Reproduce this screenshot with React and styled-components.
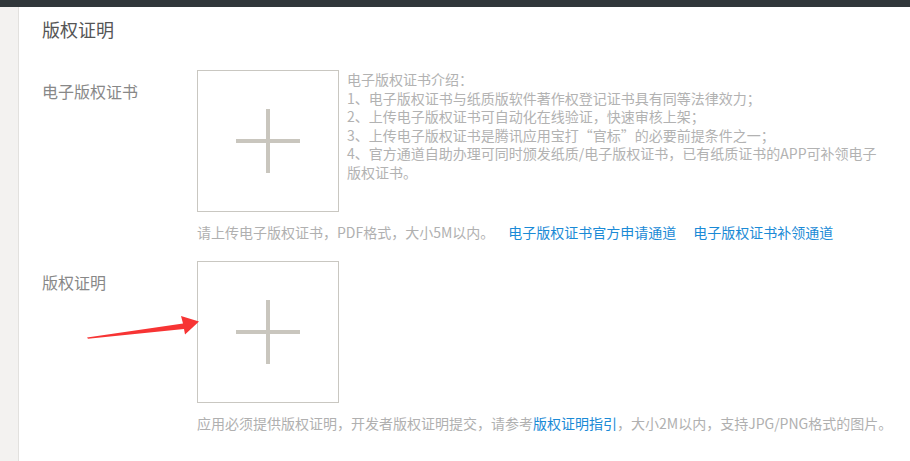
import React from 'react'
import styled, { createGlobalStyle } from 'styled-components'

const GlobalStyle = createGlobalStyle`
  html, body {
    margin: 0;
    padding: 0;
    background: #fff;
    font-family: "Noto Sans CJK SC", "Noto Sans", sans-serif;
  }
`

const Page = styled.div`
  position: relative;
  width: 910px;
  height: 461px;
  overflow: hidden;
  background: #fff;
`

const TopBar = styled.div`
  height: 7px;
  background: #30373a;
`

const Body = styled.div`
  display: flex;
  height: 454px;
`

const Sidebar = styled.aside`
  width: 18px;
  flex-shrink: 0;
  background: #f3f2f0;
  border-right: 1px solid #e2e1de;
`

const Main = styled.main`
  flex: 1;
  padding: 10px 0 0 23px;
`

const Title = styled.h2`
  margin: 0 0 29px;
  font-size: 18px;
  line-height: 24px;
  font-weight: normal;
  color: #555;
`

const Field = styled.section`
  display: grid;
  grid-template-columns: 155px 1fr;
  margin-bottom: ${p => p.$gap || 0}px;
`

const Label = styled.div`
  padding-top: 10px;
  font-size: 16px;
  line-height: 22px;
  color: #888;
`

const Upload = styled.div`
  display: flex;
  align-items: flex-start;
  gap: 8px;
`

const Box = styled.div`
  position: relative;
  width: 142px;
  height: 142px;
  box-sizing: border-box;
  border: 1px solid #c9c7c1;
  flex-shrink: 0;
  cursor: pointer;

  &::before, &::after {
    content: '';
    position: absolute;
    background: #c9c6be;
    left: 50%;
    top: 50%;
    transform: translate(-50%, -50%);
  }
  &::before { width: 64px; height: 4px; }
  &::after { width: 4px; height: 64px; }
`

const Intro = styled.div`
  font-size: 14px;
  line-height: 18.6px;
  color: #b2b2b2;
  white-space: nowrap;
`

const Hint = styled.div`
  grid-column: 2;
  margin-top: 10px;
  font-size: 14px;
  line-height: 20px;
  color: #b0b0b0;
  white-space: nowrap;
`

const Link = styled.a`
  color: #1a8ad6;
  text-decoration: none;
  margin-left: ${p => p.$gap || 0}px;
`

const Arrow = styled.svg`
  position: absolute;
  left: 0;
  top: 0;
  pointer-events: none;
`

const introLines = [
  '电子版权证书介绍：',
  '1、电子版权证书与纸质版软件著作权登记证书具有同等法律效力；',
  '2、上传电子版权证书可自动化在线验证，快速审核上架；',
  '3、上传电子版权证书是腾讯应用宝打“官标”的必要前提条件之一；',
  '4、官方通道自助办理可同时颁发纸质/电子版权证书，已有纸质证书的APP可补领电子',
  '版权证书。'
]

const App = () => (
  <Page>
    <GlobalStyle />
    <TopBar />
    <Body>
      <Sidebar />
      <Main>
        <Title>版权证明</Title>
        <Field $gap={19}>
          <Label>电子版权证书</Label>
          <Upload>
            <Box />
            <Intro>
              {introLines.map(line => <div key={line}>{line}</div>)}
            </Intro>
          </Upload>
          <Hint>
            请上传电子版权证书，PDF格式，大小5M以内。
            <Link href="#" $gap={14}>电子版权证书官方申请通道</Link>
            <Link href="#" $gap={17}>电子版权证书补领通道</Link>
          </Hint>
        </Field>
        <Field>
          <Label>版权证明</Label>
          <Upload>
            <Box />
          </Upload>
          <Hint>
            应用必须提供版权证明，开发者版权证明提交，请参考<Link href="#">版权证明指引</Link>，大小2M以内，支持JPG/PNG格式的图片。
          </Hint>
        </Field>
      </Main>
    </Body>
    <Arrow width="910" height="461" viewBox="0 0 910 461">
      <polygon
        points="87,337.5 183,323.5 181,316 199,321.5 185,334.5 184,329 88,338.8"
        fill="#f73434"
      />
    </Arrow>
  </Page>
)

export default App
